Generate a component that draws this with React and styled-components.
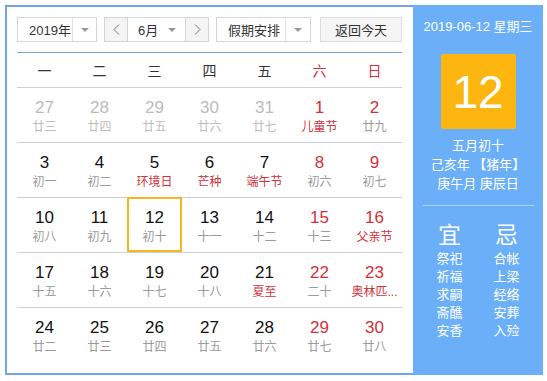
import React from "react";
import styled, { createGlobalStyle, css } from "styled-components";

const Global = createGlobalStyle`
  html, body { margin: 0; padding: 0; background: #fff; }
  body { font-family: "Liberation Sans", "Noto Sans CJK SC", sans-serif; }
  * { box-sizing: border-box; }
`;

const RED = "#d2303a";

const Page = styled.div`
  padding: 5px;
`;

const Frame = styled.div`
  display: flex;
  width: 538px;
  height: 370px;
`;

const Main = styled.div`
  width: 408px;
  height: 370px;
  border: 2px solid #70a7de;
  border-right: none;
  padding: 10px 11px 10px 10px;
  display: flex;
  flex-direction: column;
`;

const Toolbar = styled.div`
  display: flex;
  height: 25px;
  font-size: 13px;
  color: #333;
`;

const Box = styled.div`
  display: flex;
  align-items: stretch;
  height: 25px;
  border: 1px solid #d4d4d4;
  background: #fff;
  margin-right: ${(p) => p.$mr || 0}px;
  width: ${(p) => p.$w}px;
`;

const SelectText = styled.div`
  flex: 1;
  display: flex;
  align-items: center;
  padding-left: ${(p) => p.$pl || 10}px;
  white-space: nowrap;
`;

const ArrowCell = styled.div`
  width: ${(p) => p.$w || 24}px;
  display: flex;
  align-items: center;
  justify-content: center;
  border-left: ${(p) => (p.$divider ? "1px solid #e0e0e0" : "none")};
`;

const Caret = styled.span`
  width: 0;
  height: 0;
  border-left: 4px solid transparent;
  border-right: 4px solid transparent;
  border-top: 4px solid #999;
`;

const NavBtn = styled.div`
  width: 23px;
  display: flex;
  align-items: center;
  justify-content: center;
  background: #f4f4f4;
  ${(p) =>
    p.$side === "left"
      ? css`border-right: 1px solid #d4d4d4;`
      : css`border-left: 1px solid #d4d4d4;`}
`;

const TodayBtn = styled.div`
  width: 82px;
  height: 25px;
  border: 1px solid #dcdcdc;
  background: #f5f5f5;
  display: flex;
  align-items: center;
  justify-content: center;
  white-space: nowrap;
`;

const Rule = styled.div`
  height: 1px;
  background: #6fa6dd;
  margin-top: 10px;
`;

const Grid = styled.div`
  display: grid;
  grid-template-columns: repeat(7, 55px);
`;

const WeekHead = styled(Grid)`
  height: 35px;
  border-bottom: 1px solid #cfcfcf;
  align-items: center;
  font-size: 14px;
`;

const WeekDay = styled.div`
  text-align: center;
  color: ${(p) => (p.$red ? RED : "#333")};
`;

const Row = styled(Grid)`
  height: 55px;
  border-bottom: ${(p) => (p.$last ? "none" : "1px solid #cfcfcf")};
`;

const Cell = styled.div`
  display: flex;
  flex-direction: column;
  align-items: center;
  padding-top: 10px;
  ${(p) =>
    p.$selected &&
    css`
      box-shadow: inset 0 0 0 2px #f5b81c;
      margin-top: -1px;
      padding-top: 11px;
    `}
`;

const DayNum = styled.div`
  font-size: 17px;
  line-height: 20px;
  color: ${(p) => (p.$other ? "#bbb" : p.$red ? RED : "#111")};
`;

const Lunar = styled.div`
  font-size: 12px;
  line-height: 18px;
  white-space: nowrap;
  color: ${(p) => (p.$other ? "#bdbdbd" : p.$red ? RED : "#9a9a9a")};
`;

const Side = styled.div`
  width: 130px;
  height: 370px;
  background: #6aaff7;
  color: #fff;
  display: flex;
  flex-direction: column;
  align-items: center;
  padding-top: 13px;
`;

const DateLine = styled.div`
  font-size: 13px;
  line-height: 18px;
  white-space: nowrap;
`;

const BigDay = styled.div`
  width: 75px;
  height: 75px;
  margin-top: 18px;
  background: #fdb50f;
  border-radius: 2px;
  display: flex;
  align-items: center;
  justify-content: center;
  font-size: 46px;
  line-height: 1;
  color: #fff;
`;

const LunarInfo = styled.div`
  margin-top: 7px;
  font-size: 13px;
  line-height: 19px;
  text-align: center;
  white-space: nowrap;
`;

const SideRule = styled.div`
  width: 111px;
  height: 1px;
  background: rgba(255, 255, 255, 0.45);
  margin-top: 12px;
`;

const YiJi = styled.div`
  display: grid;
  grid-template-columns: 50px 50px;
  column-gap: 7px;
  margin-top: 14px;
  text-align: center;
`;

const YiJiHead = styled.div`
  font-size: 23px;
  line-height: 30px;
`;

const YiJiItem = styled.div`
  font-size: 13px;
  line-height: 18px;
`;

const Chevron = ({ dir }) => (
  <svg width="7" height="11" viewBox="0 0 7 11">
    <polyline
      points={dir === "left" ? "6,0.5 1,5.5 6,10.5" : "1,0.5 6,5.5 1,10.5"}
      fill="none"
      stroke="#777"
      strokeWidth="1"
    />
  </svg>
);

const weekdays = ["一", "二", "三", "四", "五", "六", "日"];

// [day, lunar, flags]  flags: o=other month, r=red number, f=red lunar/festival, s=selected
const weeks = [
  [[27, "廿三", "o"], [28, "廿四", "o"], [29, "廿五", "o"], [30, "廿六", "o"], [31, "廿七", "o"], [1, "儿童节", "rf"], [2, "廿九", "r"]],
  [[3, "初一", ""], [4, "初二", ""], [5, "环境日", "f"], [6, "芒种", "f"], [7, "端午节", "f"], [8, "初六", "r"], [9, "初七", "r"]],
  [[10, "初八", ""], [11, "初九", ""], [12, "初十", "s"], [13, "十一", ""], [14, "十二", ""], [15, "十三", "r"], [16, "父亲节", "rf"]],
  [[17, "十五", ""], [18, "十六", ""], [19, "十七", ""], [20, "十八", ""], [21, "夏至", "f"], [22, "二十", "r"], [23, "奥林匹...", "rf"]],
  [[24, "廿二", ""], [25, "廿三", ""], [26, "廿四", ""], [27, "廿五", ""], [28, "廿六", ""], [29, "廿七", "r"], [30, "廿八", "r"]],
];

const yi = ["祭祀", "祈福", "求嗣", "斋醮", "安香"];
const ji = ["合帐", "上梁", "经络", "安葬", "入殓"];

export default function App() {
  return (
    <>
      <Global />
      <Page>
        <Frame>
          <Main>
            <Toolbar>
              <Box $w={80} $mr={7}>
                <SelectText $pl={11}>2019年</SelectText>
                <ArrowCell $divider>
                  <Caret />
                </ArrowCell>
              </Box>
              <Box $w={105} $mr={7}>
                <NavBtn $side="left">
                  <Chevron dir="left" />
                </NavBtn>
                <SelectText $pl={10}>6月</SelectText>
                <ArrowCell $w={26}>
                  <Caret />
                </ArrowCell>
                <NavBtn $side="right">
                  <Chevron dir="right" />
                </NavBtn>
              </Box>
              <Box $w={95} $mr={9}>
                <SelectText $pl={11}>假期安排</SelectText>
                <ArrowCell $divider $w={25}>
                  <Caret />
                </ArrowCell>
              </Box>
              <TodayBtn>返回今天</TodayBtn>
            </Toolbar>
            <Rule />
            <WeekHead>
              {weekdays.map((w, i) => (
                <WeekDay key={w} $red={i >= 5}>
                  {w}
                </WeekDay>
              ))}
            </WeekHead>
            {weeks.map((week, wi) => (
              <Row key={wi} $last={wi === weeks.length - 1}>
                {week.map(([d, l, f], di) => (
                  <Cell key={di} $selected={f.includes("s")}>
                    <DayNum $other={f.includes("o")} $red={f.includes("r")}>
                      {d}
                    </DayNum>
                    <Lunar $other={f.includes("o")} $red={f.includes("f")}>
                      {l}
                    </Lunar>
                  </Cell>
                ))}
              </Row>
            ))}
          </Main>
          <Side>
            <DateLine>2019-06-12 星期三</DateLine>
            <BigDay>12</BigDay>
            <LunarInfo>
              <div>五月初十</div>
              <div>己亥年 【猪年】</div>
              <div>庚午月 庚辰日</div>
            </LunarInfo>
            <SideRule />
            <YiJi>
              <YiJiHead>宜</YiJiHead>
              <YiJiHead>忌</YiJiHead>
              {yi.map((y, i) => (
                <React.Fragment key={y}>
                  <YiJiItem>{y}</YiJiItem>
                  <YiJiItem>{ji[i]}</YiJiItem>
                </React.Fragment>
              ))}
            </YiJi>
          </Side>
        </Frame>
      </Page>
    </>
  );
}
